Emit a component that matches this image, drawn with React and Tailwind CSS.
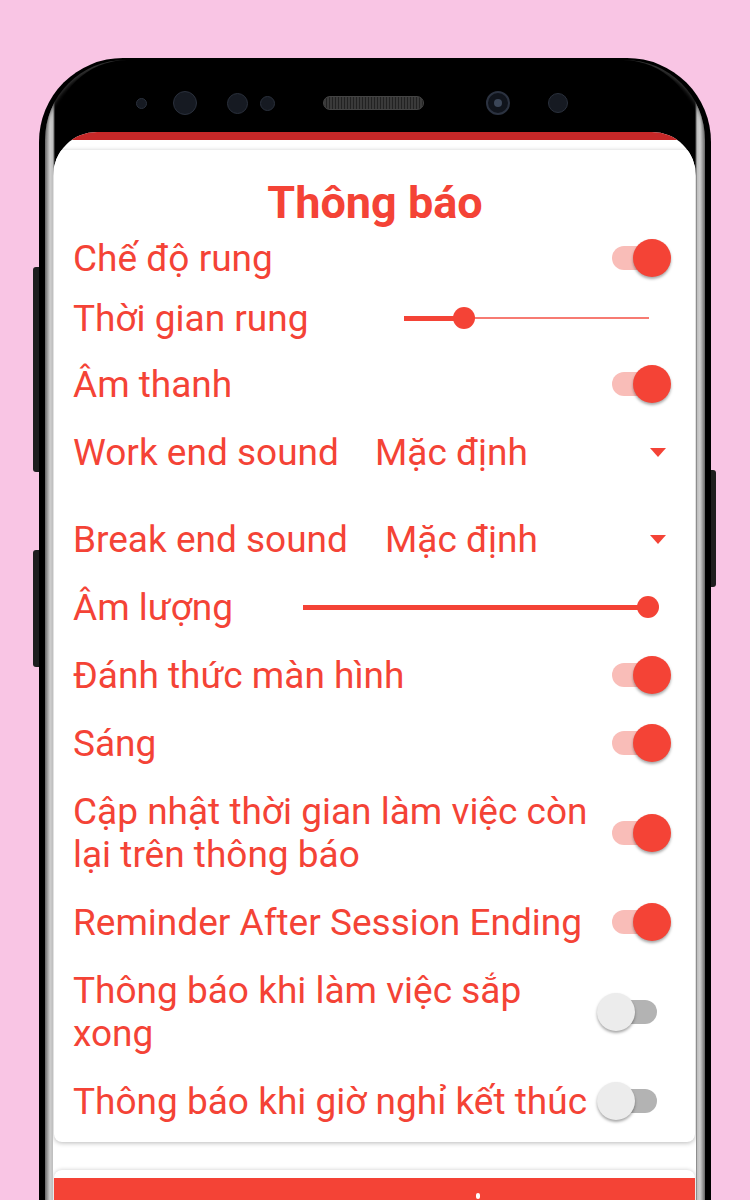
// App.jsx
const RED = "text-[#f44336]";

const Toggle = ({ on }) => (
  <div className="relative w-[74px] h-[38px] shrink-0">
    <div
      className={`absolute left-[15px] top-[7px] w-[45px] h-[24px] rounded-full ${
        on ? "bg-[#f9bdb8]" : "bg-[#b3b3b3]"
      }`}
    />
    <div
      className={`absolute top-0 w-[38px] h-[38px] rounded-full shadow-[0_2px_3px_rgba(0,0,0,0.35)] ${
        on ? "right-0 bg-[#f44336]" : "left-0 bg-[#ececec]"
      }`}
    />
  </div>
);

const Slider = ({ width, value }) => (
  <div className="relative h-[22px]" style={{ width }}>
    <div className="absolute left-0 right-0 top-[10px] h-[2px] bg-[#f77b72]" />
    <div
      className="absolute left-0 top-[8.5px] h-[5px] bg-[#f44336]"
      style={{ width: value }}
    />
    <div
      className="absolute top-0 w-[22px] h-[22px] -ml-[11px] rounded-full bg-[#f44336]"
      style={{ left: value }}
    />
  </div>
);

const Caret = () => (
  <svg width="16" height="9" viewBox="0 0 16 9" className="ml-auto mr-[5px]">
    <path d="M0 0 L16 0 L8 9 Z" fill="#f44336" />
  </svg>
);

const Row = ({ className = "", children }) => (
  <div className={`flex items-center ${className}`}>{children}</div>
);

const Label = ({ children, className = "" }) => (
  <div className={`text-[37px] leading-[43px] whitespace-nowrap ${RED} ${className}`}>
    {children}
  </div>
);

const Sensor = ({ className }) => (
  <div
    className={`rounded-full bg-[#161a22] border border-[#2a303c] shrink-0 ${className}`}
  />
);

export default function App() {
  return (
    <div className="h-[1200px] overflow-hidden bg-[#f9c5e4] font-[Roboto,sans-serif]">
      <div className="relative ml-[39px] mt-[58px] w-[672px]">
        {/* side buttons */}
        <div className="absolute -left-[6px] top-[209px] w-[6px] h-[205px] rounded-l-[3px] bg-[#1e1e1e]" />
        <div className="absolute -left-[6px] top-[492px] w-[6px] h-[117px] rounded-l-[3px] bg-[#1e1e1e]" />
        <div className="absolute -right-[5px] top-[412px] w-[5px] h-[117px] rounded-r-[3px] bg-[#1e1e1e]" />

        {/* body */}
        <div className="rounded-t-[84px] bg-black px-[6px] pt-[2px] h-[1250px]">
          <div className="h-full rounded-t-[80px] bg-[linear-gradient(90deg,#6f6f6f_0px,#cfcfcf_5px,#bdbdbd_8px,#000_10px,#000_650px,#bdbdbd_652px,#cfcfcf_655px,#6f6f6f_660px)] shadow-[inset_0_5px_4px_-2px_#3a3a3a]">
            {/* top bezel */}
            <div className="h-[72px] mx-[10px] bg-black rounded-t-[74px] flex items-center pt-[14px]">
              <Sensor className="ml-[81px] w-[11px] h-[11px]" />
              <Sensor className="ml-[26px] w-[24px] h-[24px] bg-[#1a2030]" />
              <Sensor className="ml-[30px] w-[21px] h-[21px]" />
              <Sensor className="ml-[12px] w-[15px] h-[15px]" />
              <div className="ml-[48px] w-[101px] h-[14px] rounded-full border border-[#444] bg-[repeating-linear-gradient(90deg,#3a3a3a_0,#3a3a3a_2px,#222_2px,#222_3px)]" />
              <div className="ml-[62px] w-[24px] h-[24px] rounded-full bg-[#10141c] border-2 border-[#2b3240] flex items-center justify-center">
                <div className="w-[8px] h-[8px] rounded-full bg-[#3b4658]" />
              </div>
              <Sensor className="ml-[38px] w-[20px] h-[20px]" />
            </div>

            {/* screen */}
            <div className="ml-[8px] mr-[9px] rounded-t-[44px] overflow-hidden bg-white h-[1200px]">
              <div className="h-[8px] bg-[#c62828]" />

              <div className="mt-[10px] mx-[1px] rounded-[8px] bg-white shadow-[0_1px_5px_rgba(0,0,0,0.28)] pl-[19px] pr-[24px] pt-[28px] pb-[11px]">
                <div className={`text-center pl-[6px] font-bold text-[45px] leading-[50px] ${RED}`}>
                  Thông báo
                </div>

                <Row className="h-[60px] justify-between">
                  <Label>Chế độ rung</Label>
                  <Toggle on />
                </Row>

                <Row className="h-[60px]">
                  <Label className="w-[331px]">Thời gian rung</Label>
                  <Slider width={245} value={60} />
                </Row>

                <Row className="h-[60px] mt-[6px] justify-between">
                  <Label>Âm thanh</Label>
                  <Toggle on />
                </Row>

                <Row className="h-[60px] mt-[8px]">
                  <Label className="w-[302px]">Work end sound</Label>
                  <Label>Mặc định</Label>
                  <Caret />
                </Row>

                <Row className="h-[60px] mt-[27px]">
                  <Label className="w-[312px]">Break end sound</Label>
                  <Label>Mặc định</Label>
                  <Caret />
                </Row>

                <Row className="h-[60px] mt-[8px]">
                  <Label className="w-[230px]">Âm lượng</Label>
                  <Slider width={345} value={345} />
                </Row>

                <Row className="h-[60px] mt-[8px] justify-between">
                  <Label>Đánh thức màn hình</Label>
                  <Toggle on />
                </Row>

                <Row className="h-[60px] mt-[8px] justify-between">
                  <Label>Sáng</Label>
                  <Toggle on />
                </Row>

                <Row className="h-[96px] mt-[12px] justify-between">
                  <Label>
                    Cập nhật thời gian làm việc còn
                    <br />
                    lại trên thông báo
                  </Label>
                  <Toggle on />
                </Row>

                <Row className="h-[60px] mt-[11px] justify-between">
                  <Label>Reminder After Session Ending</Label>
                  <Toggle on />
                </Row>

                <Row className="h-[96px] mt-[12px] justify-between">
                  <Label>
                    Thông báo khi làm việc sắp
                    <br />
                    xong
                  </Label>
                  <Toggle />
                </Row>

                <Row className="h-[60px] mt-[11px] justify-between">
                  <Label>Thông báo khi giờ nghỉ kết thúc</Label>
                  <Toggle />
                </Row>
              </div>

              {/* next card */}
              <div className="mt-[28px] mx-[1px] rounded-t-[8px] bg-white shadow-[0_0_4px_rgba(0,0,0,0.2)] pt-[8px]">
                <div className="h-[80px] bg-[#f44336] flex justify-center">
                  <div className="ml-[206px] mt-[15px] w-[4px] h-[6px] rounded-[2px] bg-white" />
                </div>
              </div>
            </div>
          </div>
        </div>
      </div>
    </div>
  );
}
